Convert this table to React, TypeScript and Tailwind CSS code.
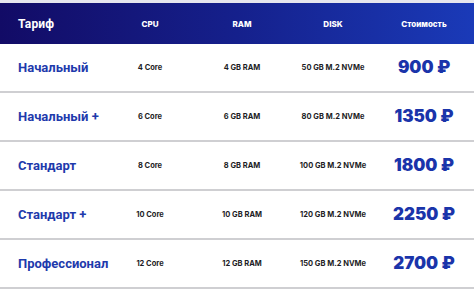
const plans = [
  { name: "Начальный", cpu: "4 Core", ram: "4 GB RAM", disk: "50 GB M.2 NVMe", price: "900 ₽" },
  { name: "Начальный +", cpu: "6 Core", ram: "6 GB RAM", disk: "80 GB M.2 NVMe", price: "1350 ₽" },
  { name: "Стандарт", cpu: "8 Core", ram: "8 GB RAM", disk: "100 GB M.2 NVMe", price: "1800 ₽" },
  { name: "Стандарт +", cpu: "10 Core", ram: "10 GB RAM", disk: "120 GB M.2 NVMe", price: "2250 ₽" },
  { name: "Профессионал", cpu: "12 Core", ram: "12 GB RAM", disk: "150 GB M.2 NVMe", price: "2700 ₽" },
];

const cols = "grid grid-cols-[104px_92px_92px_90px_92px] items-center";

export default function App() {
  return (
    <div className="w-[474px] h-[295px] bg-white overflow-hidden font-['Inter','Liberation_Sans',sans-serif]">
      <div className="h-[3px] bg-[#e6e6ee]" />
      <div className={`${cols} h-[41px] bg-gradient-to-r from-[#120b66] via-[#15208c] to-[#1a3ab8] text-white font-extrabold`}>
        <span className="pl-[18px] text-[12px] font-['Roboto',sans-serif] font-bold tracking-[0.2px]">Тариф</span>
        <span className="text-center text-[8px]">CPU</span>
        <span className="text-center text-[8px]">RAM</span>
        <span className="text-center text-[8px]">DISK</span>
        <span className="text-center text-[8px]">Стоимость</span>
      </div>
      {plans.map((p) => (
        <div key={p.name} className={`${cols} h-[49px] border-b-2 border-[#cfcfd2]`}>
          <span className="pl-[18px] text-[13px] font-['Roboto',sans-serif] font-bold text-[#1e3aac] whitespace-nowrap">{p.name}</span>
          <span className="text-center text-[7.5px] font-bold text-[#1c1c24]">{p.cpu}</span>
          <span className="text-center text-[7.5px] font-bold text-[#1c1c24]">{p.ram}</span>
          <span className="text-center text-[7.5px] font-bold text-[#1c1c24] whitespace-nowrap">{p.disk}</span>
          <span className="text-center text-[17px] font-black text-[#1a34aa] whitespace-nowrap">{p.price}</span>
        </div>
      ))}
    </div>
  );
}
